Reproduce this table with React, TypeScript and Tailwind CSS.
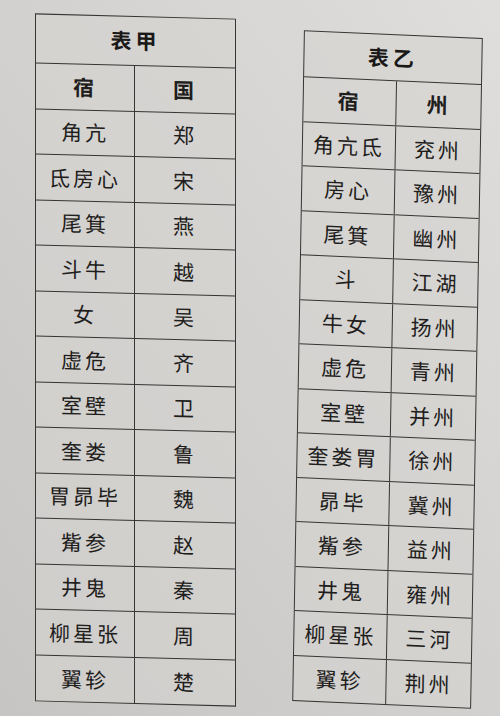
import React from "react";

type Row = [string, string];

const tableA: Row[] = [
  ["角亢", "郑"],
  ["氐房心", "宋"],
  ["尾箕", "燕"],
  ["斗牛", "越"],
  ["女", "吴"],
  ["虚危", "齐"],
  ["室壁", "卫"],
  ["奎娄", "鲁"],
  ["胃昴毕", "魏"],
  ["觜参", "赵"],
  ["井鬼", "秦"],
  ["柳星张", "周"],
  ["翼轸", "楚"],
];

const tableB: Row[] = [
  ["角亢氐", "兖州"],
  ["房心", "豫州"],
  ["尾箕", "幽州"],
  ["斗", "江湖"],
  ["牛女", "扬州"],
  ["虚危", "青州"],
  ["室壁", "并州"],
  ["奎娄胃", "徐州"],
  ["昴毕", "冀州"],
  ["觜参", "益州"],
  ["井鬼", "雍州"],
  ["柳星张", "三河"],
  ["翼轸", "荆州"],
];

const font = "font-['Noto_Sans_CJK_SC','Noto_Sans_CJK_TC',sans-serif]";

function StarTable({
  title,
  head,
  rows,
  colA,
  colB,
  titleH,
  rowH,
}: {
  title: string;
  head: Row;
  rows: Row[];
  colA: string;
  colB: string;
  titleH: string;
  rowH: string;
}) {
  return (
    <div className="border-[1.5px] border-[#363534] bg-[#d5d3d1]/60">
      <div
        className={`flex items-center justify-center border-b-[1.5px] border-[#363534] ${titleH} text-[21px] font-bold tracking-[4px] text-[#1a1918]`}
      >
        {title}
      </div>
      {[head, ...rows].map((row, i) => (
        <div
          key={row[0] + i}
          className={`flex ${rowH} ${
            i < rows.length ? "border-b-[1.5px] border-[#363534]" : ""
          }`}
        >
          <div
            className={`flex ${colA} items-center justify-center border-r-[1.5px] border-[#363534] text-[21px] tracking-[3px] text-[#1f1e1d] ${
              i === 0 ? "font-bold" : ""
            }`}
          >
            {row[0]}
          </div>
          <div
            className={`flex ${colB} items-center justify-center text-[21px] tracking-[3px] text-[#1f1e1d] ${
              i === 0 ? "font-bold" : ""
            }`}
          >
            {row[1]}
          </div>
        </div>
      ))}
    </div>
  );
}

export default function App() {
  return (
    <div
      className={`h-[716px] w-[500px] overflow-hidden bg-gradient-to-bl from-[#e0dedc] via-[#d3d1cf] to-[#c7c5c3] ${font}`}
    >
      <div className="flex items-start">
        <div className="ml-[35px] mt-[16px] skew-y-[1.5deg]">
          <StarTable
            title="表甲"
            head={["宿", "国"]}
            rows={tableA}
            colA="w-[99px]"
            colB="w-[100px]"
            titleH="h-[49px]"
            rowH="h-[45.5px]"
          />
        </div>
        <div className="ml-[62px] mt-[34px] rotate-[1deg] skew-y-[1.5deg]">
          <StarTable
            title="表乙"
            head={["宿", "州"]}
            rows={tableB}
            colA="w-[93px]"
            colB="w-[84px]"
            titleH="h-[46px]"
            rowH="h-[44.5px]"
          />
        </div>
      </div>
    </div>
  );
}
